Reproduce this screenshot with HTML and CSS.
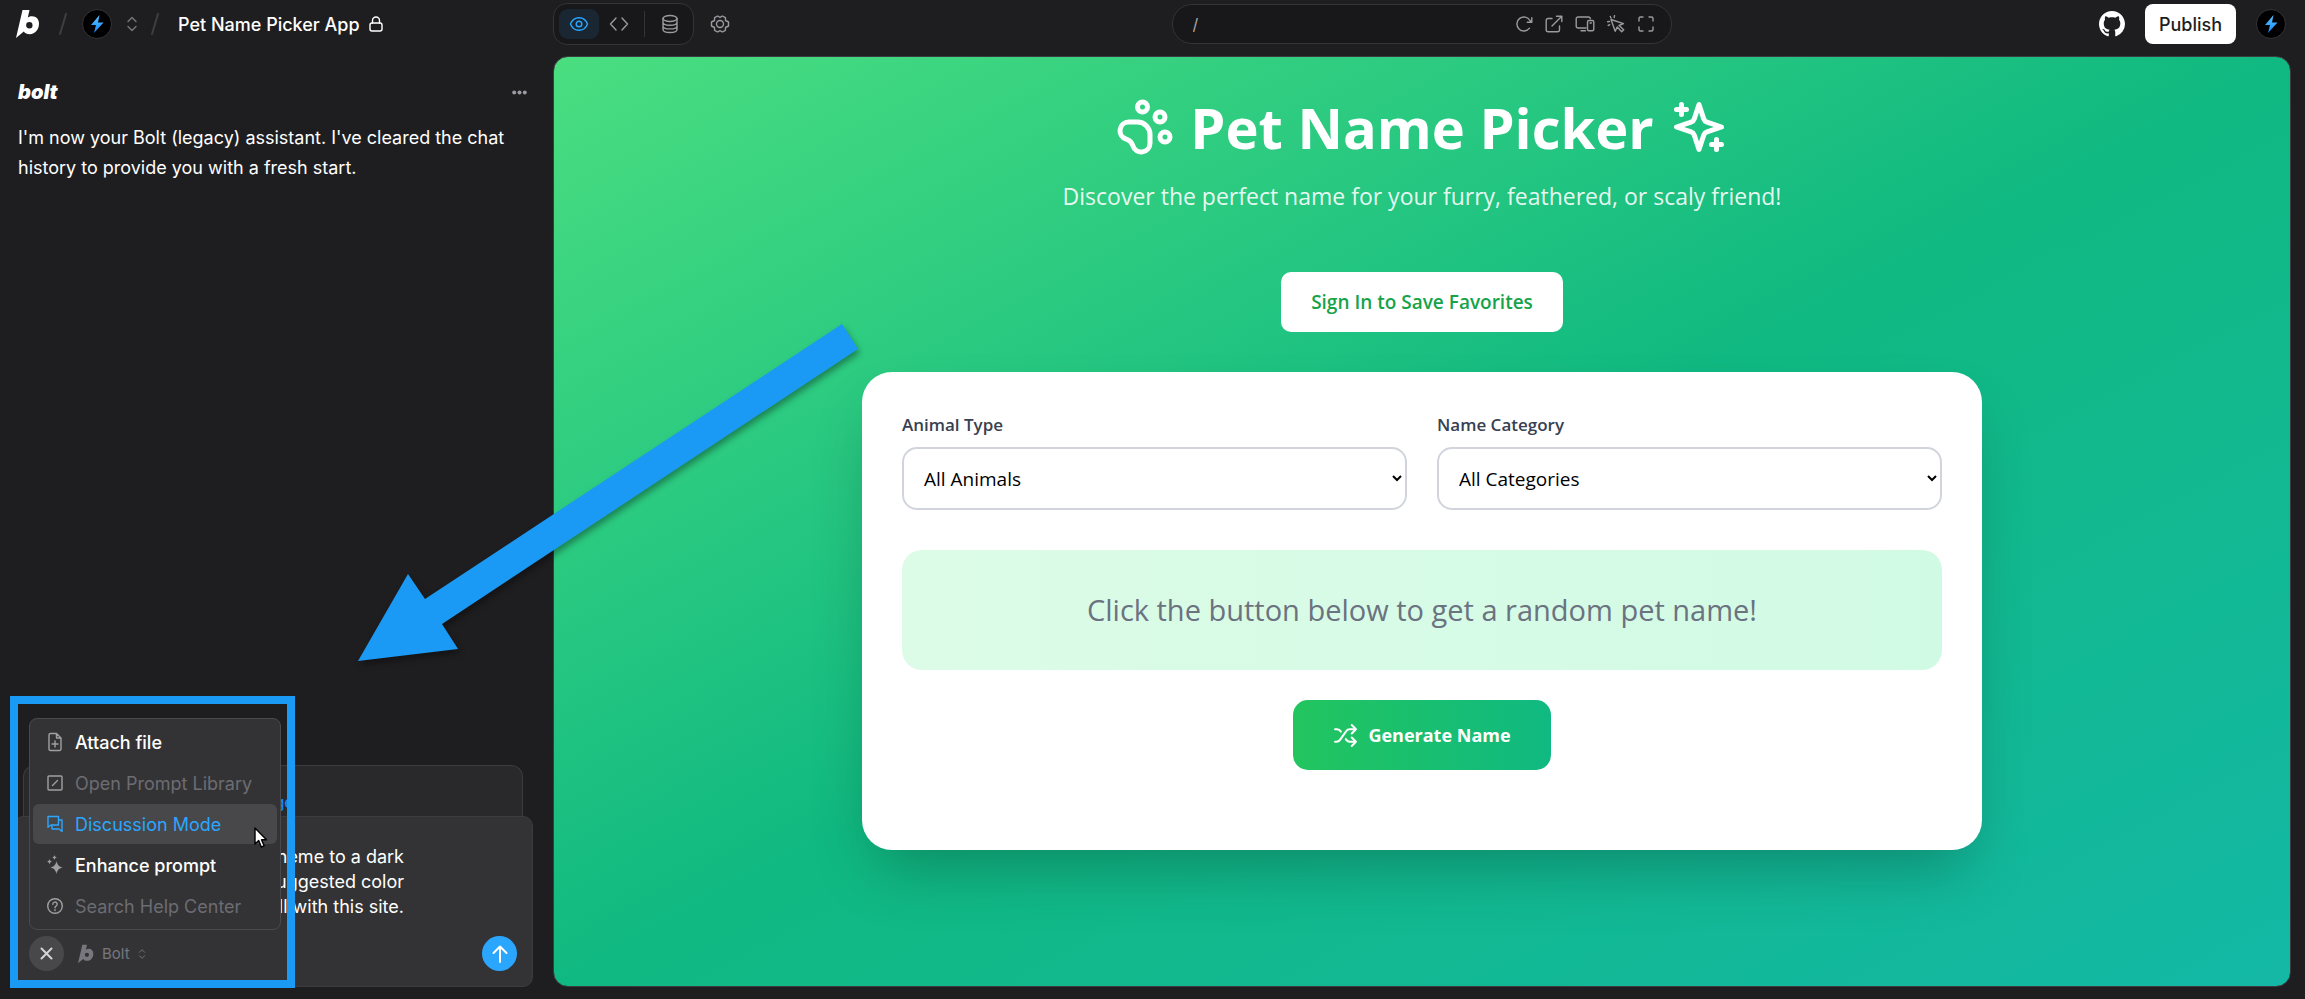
FILE: index.html
```html
<!DOCTYPE html>
<html lang="en">
    <head>
        <meta charset="utf-8">
        <title>Pet Name Picker App</title>
        <link rel="stylesheet" href="styles.css">
    </head>
    <body>
        <!-- shared icons -->
        <svg class="defs" width="0" height="0">
            <defs>
                <linearGradient id="boltFill" x1="0" y1="0" x2="0" y2="1">
                    <stop offset="0" stop-color="#5cc4ff"/>
                    <stop offset="1" stop-color="#1488fc"/>
                </linearGradient>
            </defs>
            <symbol id="logo" viewBox="0 0 24 30">
                <path fill="currentColor" fill-rule="evenodd" d="M6.500 1h7L11.800 8.500C13 7.600 14.500 7.200 16 7.200c4.500 0 7 3.100 7 7.400 0 5.900-3.800 10.700-9.200 10.700-2.800 0-4.800-1-6-2.800L0 29ZM13.300 13a3.200 3.200 0 1 0 .1 6.400 3.200 3.200 0 0 0-.1-6.400Z"/>
            </symbol>
            <symbol id="flash" viewBox="0 0 14 18">
                <path fill="url(#boltFill)" d="M9.500 0 1 10h5L4 18 13.500 7.500H8L9.500 0Z"/>
            </symbol>
            <symbol id="updown" viewBox="0 0 12 16">
                <path d="m2 5.500 4-4 4 4M2 10.500l4 4 4-4"/>
            </symbol>
        </svg>

        <header class="topbar">
            <div class="crumbs">
                <a class="brand" href="#" aria-label="Bolt"><svg width="24" height="30"><use href="#logo"/></svg></a>
                <svg class="slash" width="10" height="24" viewBox="0 0 10 24"><path d="M8 2 2 22"/></svg>
                <a class="avatar" href="#" aria-label="Account"><svg width="14" height="18"><use href="#flash"/></svg></a>
                <button class="icon-btn switch" aria-label="Switch account"><svg width="12" height="16"><use href="#updown"/></svg></button>
                <svg class="slash" width="10" height="24" viewBox="0 0 10 24"><path d="M8 2 2 22"/></svg>
                <a class="project" href="#">Pet Name Picker App
                    <svg width="16" height="18" viewBox="0 0 16 18"><rect x="2" y="8" width="12" height="8" rx="2"/><path d="M4.500 8V5.500a3.500 3.500 0 0 1 7 0V8"/></svg>
                </a>
            </div>

            <div class="tools">
                <div class="tools-left">
                    <nav class="views">
                        <button class="view active" aria-label="Preview"><svg width="20" height="16" viewBox="0 0 20 16"><path d="M1.500 8C3 4 6.200 1.700 10 1.700S17 4 18.500 8C17 12 13.800 14.300 10 14.300S3 12 1.500 8Z"/><circle cx="10" cy="8" r="2.800"/></svg></button>
                        <button class="view" aria-label="Code"><svg width="20" height="16" viewBox="0 0 20 16"><path d="M7 2 1.500 8 7 14M13 2l5.500 6L13 14"/></svg></button>
                        <span class="divider"></span>
                        <button class="view" aria-label="Database"><svg width="18" height="20" viewBox="0 0 18 20"><ellipse cx="9" cy="4.500" rx="7" ry="3"/><path d="M2 4.500v11c0 1.700 3.100 3 7 3s7-1.300 7-3v-11M2 8.200c0 1.700 3.100 3 7 3s7-1.300 7-3M2 11.900c0 1.700 3.100 3 7 3s7-1.300 7-3"/></svg></button>
                    </nav>
                    <button class="icon-btn settings" aria-label="Settings"><svg width="20" height="20" viewBox="0 0 20 20"><path d="m7.600 2 2.400 1.300L12.400 2l3 1.700.1 2.800L18.500 8v4l-3 1.500-.1 2.800-3 1.700-2.400-1.300L7.600 18l-3-1.700-.1-2.800L1.500 12V8l3-1.500.1-2.800Z"/><circle cx="10" cy="10" r="3.500"/></svg></button>
                </div>

                <div class="address">
                    <input class="path" type="text" value="/" aria-label="Path">
                    <button class="icon-btn" aria-label="Reload"><svg width="18" height="18" viewBox="0 0 18 18"><path d="M14.500 13.200A7 7 0 1 1 15 5.500l1.500 1.700M16.800 2.800v4.500h-4.500"/></svg></button>
                    <button class="icon-btn" aria-label="Open in new tab"><svg width="18" height="18" viewBox="0 0 18 18"><path d="M7 3.500H3.200a2 2 0 0 0-2 2v9.300a2 2 0 0 0 2 2h9.300a2 2 0 0 0 2-2V11M11.500 1.200h5.300v5.300M16.500 1.500 7 11"/></svg></button>
                    <button class="icon-btn" aria-label="Devices"><svg width="20" height="18" viewBox="0 0 20 18"><path d="M11 13H3a1.800 1.800 0 0 1-1.800-1.800V3.800A1.800 1.800 0 0 1 3 2h10.500a1.800 1.800 0 0 1 1.800 1.800M6 15.800h4.500"/><rect x="12.500" y="5.500" width="6.300" height="10.300" rx="1.500"/><path d="M15 8h1.300"/></svg></button>
                    <button class="icon-btn" aria-label="Select element"><svg width="18" height="18" viewBox="0 0 18 18"><path d="m4 4.500 4.200 11.800 2-4.300 4.500 4.800 2-2-4.700-4.300 4.500-1.800ZM7.500.5l-.3 2M3.300 1.500 4 3M.5 6.800l2-.3M1.200 10.500l1.600-.8"/></svg></button>
                    <button class="icon-btn" aria-label="Full screen"><svg width="18" height="18" viewBox="0 0 18 18"><path d="M2 6V3.500A1.500 1.500 0 0 1 3.500 2H6M12 2h2.500A1.500 1.500 0 0 1 16 3.500V6M16 12v2.500a1.500 1.500 0 0 1-1.500 1.500H12M6 16H3.500A1.500 1.500 0 0 1 2 14.500V12"/></svg></button>
                </div>

                <div class="tools-right">
                    <a class="github" href="#" aria-label="GitHub"><svg width="26" height="26" viewBox="0 0 16 16"><path fill="currentColor" stroke="none" d="M8 0C3.580 0 0 3.580 0 8c0 3.540 2.290 6.530 5.470 7.590.4.070.550-.170.550-.380 0-.190-.010-.820-.010-1.490-2.010.370-2.530-.490-2.690-.940-.090-.230-.480-.940-.820-1.130-.280-.150-.680-.520-.010-.530.630-.010 1.080.580 1.230.820.720 1.210 1.870.870 2.330.660.070-.520.280-.870.510-1.070-1.780-.2-3.640-.890-3.640-3.950 0-.870.310-1.590.820-2.150-.080-.2-.360-1.020.080-2.120 0 0 .670-.210 2.200.820.640-.180 1.320-.270 2-.270.680 0 1.360.090 2 .270 1.530-1.040 2.200-.820 2.200-.820.440 1.100.160 1.920.080 2.120.510.560.820 1.270.820 2.150 0 3.070-1.870 3.750-3.650 3.950.290.250.540.730.540 1.480 0 1.070-.010 1.930-.010 2.200 0 .210.150.460.550.380A8.012 8.012 0 0 0 16 8c0-4.420-3.580-8-8-8z"/></svg></a>
                    <button class="publish">Publish</button>
                    <a class="avatar" href="#" aria-label="Profile"><svg width="14" height="18"><use href="#flash"/></svg></a>
                </div>
            </div>
        </header>

        <main class="workspace">
            <section class="chat">
                <div class="message">
                    <div class="message-head">
                        <span class="wordmark">bolt</span>
                        <button class="icon-btn" aria-label="More"><svg width="15" height="5" viewBox="0 0 15 5"><g fill="currentColor" stroke="none"><circle cx="2.200" cy="2.500" r="2"/><circle cx="7.500" cy="2.500" r="2"/><circle cx="12.800" cy="2.500" r="2"/></g></svg></button>
                    </div>
                    <p>I'm now your Bolt (legacy) assistant. I've cleared the chat history to provide you with a fresh start.</p>
                </div>

                <div class="prompt">
                    <div class="notice"><a href="#">Manage</a></div>
                    <div class="composer">
                        <textarea rows="3" aria-label="Prompt">theme to a dark
suggested color
well with this site.</textarea>
                        <div class="composer-bar">
                            <button class="round close" aria-label="Close menu"><svg width="13" height="13" viewBox="0 0 13 13"><path d="m1.500 1.500 10 10M11.500 1.500l-10 10"/></svg></button>
                            <button class="agent"><svg width="16" height="20"><use href="#logo"/></svg>Bolt<svg width="8" height="12"><use href="#updown"/></svg></button>
                            <button class="round send" aria-label="Send"><svg width="16" height="18" viewBox="0 0 16 18"><path d="M8 17V1.500M1.500 8 8 1.500 14.500 8"/></svg></button>
                        </div>

                        <div class="menu">
                            <button class="item"><svg width="16" height="20" viewBox="0 0 16 20"><path d="M9.500 1.500h-6A1.500 1.500 0 0 0 2 3v14a1.500 1.500 0 0 0 1.500 1.500h9A1.500 1.500 0 0 0 14 17V6ZM9.500 1.500V6H14M8 9v6M5 12h6"/></svg>Attach file</button>
                            <button class="item" disabled><svg width="16" height="18" viewBox="0 0 16 18"><rect x="1" y="2" width="14" height="14" rx="1"/><path d="m5.500 11.500 5-5"/></svg>Open Prompt Library</button>
                            <button class="item active"><svg width="16" height="18" viewBox="0 0 16 18"><path d="M1 1.500h10.500v8.500H4L1 12.300ZM11.500 5H15v11.500L12 14H5v-3.800"/></svg>Discussion Mode</button>
                            <button class="item"><svg width="16" height="20" viewBox="0 0 16 20"><g fill="currentColor" stroke="none"><path d="M9.500 6c.8 4 2.500 5.700 6.500 6.500-4 .8-5.700 2.500-6.500 6.500-.8-4-2.500-5.700-6.500-6.500 4-.8 5.700-2.500 6.500-6.500ZM7.500 0c.4 1.500 1 2.100 2.500 2.500-1.500.4-2.100 1-2.500 2.500-.4-1.500-1-2.100-2.500-2.500 1.500-.4 2.100-1 2.500-2.500ZM2.500 4c.4 1.700 1 2.300 2.500 2.700-1.500.4-2.100 1-2.500 2.700C2.100 7.700 1.500 7.100 0 6.700 1.500 6.300 2.100 5.700 2.500 4Z"/></g></svg>Enhance prompt</button>
                            <button class="item" disabled><svg width="16" height="18" viewBox="0 0 16 18"><circle cx="8" cy="9" r="7.300"/><path d="M5.800 7.300A2.200 2.200 0 1 1 9 9.200c-.7.400-1 .8-1 1.500M8 12.700v.8"/></svg>Search Help Center</button>
                            <svg class="cursor" width="14" height="22" viewBox="0 0 14 22"><path fill="#fff" stroke="#000" d="M1 1v16l3.700-3.500L7.300 20l2.800-1.200-2.600-6H12.500Z"/></svg>
                        </div>
                    </div>
                </div>
            </section>

            <section class="preview">
                <h1>
                    <svg width="60" height="60" viewBox="0 0 24 24"><circle cx="11" cy="4" r="2"/><circle cx="18" cy="8" r="2"/><circle cx="20" cy="16" r="2"/><path d="M9 10a5 5 0 0 1 5 5v3.500a3.500 3.500 0 0 1-6.840 1.045Q6.520 17.480 4.460 16.840A3.500 3.500 0 0 1 5.500 10Z"/></svg>
                    Pet Name Picker
                    <svg width="60" height="60" viewBox="0 0 24 24"><path d="m12 3-1.912 5.813a2 2 0 0 1-1.275 1.275L3 12l5.813 1.912a2 2 0 0 1 1.275 1.275L12 21l1.912-5.813a2 2 0 0 1 1.275-1.275L21 12l-5.813-1.912a2 2 0 0 1-1.275-1.275L12 3ZM5 3v4M19 17v4M3 5h4M17 19h4"/></svg>
                </h1>
                <p class="tagline">Discover the perfect name for your furry, feathered, or scaly friend!</p>
                <button class="signin">Sign In to Save Favorites</button>

                <div class="card">
                    <div class="filters">
                        <div class="field">
                            <label for="animal">Animal Type</label>
                            <select id="animal"><option>All Animals</option></select>
                        </div>
                        <div class="field">
                            <label for="category">Name Category</label>
                            <select id="category"><option>All Categories</option></select>
                        </div>
                    </div>
                    <div class="result">Click the button below to get a random pet name!</div>
                    <button class="generate">
                        <svg width="25" height="25" viewBox="0 0 24 24"><path d="M2 18h1.400c1.300 0 2.500-.6 3.300-1.700l6.100-8.600c.7-1.100 2-1.700 3.300-1.700H22M18 2l4 4-4 4M2 6h1.900c1.500 0 2.900.9 3.600 2.200M22 18h-5.900c-1.300 0-2.600-.7-3.300-1.800l-.5-.8M18 14l4 4-4 4"/></svg>
                        Generate Name
                    </button>
                </div>
            </section>
        </main>

        <!-- callout -->
        <svg class="arrow" width="520" height="360" viewBox="350 315 520 360"><path fill="#1b9af5" stroke="none" d="M358 661 408 574 425 599 842 324 858 349 442 624 458 649Z"/></svg>
        <div class="frame"></div>
    </body>
</html>
```

FILE: styles.css
```css
*{
    box-sizing: border-box;
}
body{
    margin: 0;
    height: 100vh;
    display: flex;
    flex-direction: column;
    position: relative;
    overflow: hidden;
    background-color: #1e1e21;
    color: #fff;
    font-family: Inter, "Liberation Sans", sans-serif;
    font-size: 18px;
}
a{
    color: inherit;
    text-decoration: none;
}
button, input, select, textarea{
    font: inherit;
    color: inherit;
    margin: 0;
    padding: 0;
    border: 0;
    background: none;
}
svg{
    display: block;
    flex: none;
    fill: none;
    stroke: currentColor;
    stroke-width: 1.4;
    stroke-linecap: round;
    stroke-linejoin: round;
}
symbol{
    overflow: visible;
}
#logo, #flash{
    stroke: none;
}
.defs{
    position: absolute;
}

/* top bar */
.topbar{
    display: grid;
    grid-template-columns: 553px 1fr;
    height: 56px;
    padding: 0 15px 8px 0;
    align-items: center;
}
.crumbs{
    display: flex;
    align-items: center;
    padding-left: 16px;
}
.slash{
    color: #3f3f43;
    stroke-width: 2;
    margin: 0 14px 0 18px;
}
.crumbs .slash:nth-of-type(2){
    margin: 0 18px 0 12px;
}
.avatar{
    display: flex;
    align-items: center;
    justify-content: center;
    width: 30px;
    height: 30px;
    border: 1px solid #343438;
    border-radius: 50%;
    background-color: #000;
}
.icon-btn{
    display: flex;
    align-items: center;
    justify-content: center;
    color: #9a9aa0;
}
.switch{
    margin-left: 14px;
    color: #77777d;
}
.project{
    display: flex;
    align-items: center;
    gap: 8px;
    font-weight: 500;
}
.tools{
    display: grid;
    grid-template-columns: 1fr 500px 1fr;
    align-items: center;
}
.tools-left, .tools-right{
    display: flex;
    align-items: center;
}
.tools-right{
    justify-content: flex-end;
    gap: 20px;
    padding-right: 4px;
}
.views{
    display: flex;
    align-items: center;
    height: 42px;
    padding: 0 3px 0 5px;
    border: 1px solid #343438;
    border-radius: 14px;
    background-color: #18181a;
    color: #9a9aa0;
}
.view{
    display: flex;
    align-items: center;
    justify-content: center;
    width: 40px;
    height: 30px;
    border-radius: 9px;
}
.view.active{
    background-color: #1a2733;
    color: #2ba6ff;
}
.views .divider{
    width: 1px;
    height: 26px;
    margin: 0 5px;
    background-color: #343438;
}
.settings{
    margin-left: 16px;
}
.address{
    display: flex;
    align-items: center;
    gap: 12px;
    height: 40px;
    padding: 0 16px 0 20px;
    border: 1px solid #343438;
    border-radius: 20px;
    background-color: #18181a;
}
.path{
    flex: 1;
    min-width: 0;
    color: #a8a8ae;
    font-size: 16px;
}
.publish{
    height: 40px;
    padding: 0 14px;
    border-radius: 8px;
    background-color: #fff;
    color: #1e1e21;
    font-weight: 500;
}

/* chat column */
.workspace{
    flex: 1;
    display: grid;
    grid-template-columns: 553px 1fr;
    padding: 0 14px 12px 0;
    min-height: 0;
}
.chat{
    display: flex;
    flex-direction: column;
    justify-content: space-between;
    padding: 22px 20px 0 13px;
}
.message{
    padding: 0 6px 0 5px;
}
.message-head{
    display: flex;
    align-items: center;
    justify-content: space-between;
    height: 28px;
}
.wordmark{
    font-size: 20px;
    font-weight: 900;
    font-style: italic;
}
.message p{
    margin: 17px 0 0;
    line-height: 30px;
}
.notice{
    height: 51px;
    margin: 0 10px;
    padding: 26px 0 0 208px;
    border: 1px solid #3c3c40;
    border-bottom: 0;
    border-radius: 12px 12px 0 0;
    background-color: #29292b;
    color: #1488fc;
    font-size: 16px;
    font-weight: 500;
    line-height: 20px;
}
.composer{
    position: relative;
    border: 1px solid #3c3c40;
    border-radius: 10px;
    background-color: #333335;
}
.composer textarea{
    display: block;
    width: 100%;
    height: 119px;
    padding: 27px 128px 17px 16px;
    overflow: hidden;
    resize: none;
    line-height: 25px;
    text-align: right;
}
.composer-bar{
    display: flex;
    align-items: center;
    padding: 0 15px 15px;
}
.round{
    display: flex;
    align-items: center;
    justify-content: center;
    width: 35px;
    height: 35px;
    border-radius: 50%;
}
.round svg{
    stroke-width: 2;
}
.close{
    background-color: #48484a;
    color: #d4d4d8;
}
.send{
    margin-left: auto;
    background-color: #2ba6ff;
}
.agent{
    display: flex;
    align-items: center;
    gap: 8px;
    margin-left: 14px;
    color: #77777d;
    font-size: 15px;
}
.menu{
    position: absolute;
    left: 15px;
    bottom: 56px;
    display: flex;
    flex-direction: column;
    gap: 1px;
    width: 252px;
    padding: 3px;
    border: 1px solid #4a4a4d;
    border-radius: 8px;
    background-color: #333335;
}
.item{
    display: flex;
    align-items: center;
    gap: 12px;
    height: 40px;
    padding: 0 14px;
    border-radius: 6px;
    font-weight: 500;
}
.item svg{
    color: #a0a0a4;
}
.item:disabled{
    color: #6c6c73;
    font-weight: 400;
}
.item.active, .item.active svg{
    background-color: #48484a;
    color: #2ba6ff;
    font-weight: 400;
}
.menu .cursor{
    position: absolute;
    left: 224px;
    top: 108px;
}

/* app preview */
.preview{
    display: flex;
    flex-direction: column;
    align-items: center;
    padding: 40px;
    border: 1px solid #3c3c40;
    border-radius: 15px;
    background: linear-gradient(to bottom right, #4ade80, #10b981, #14b8a6);
    font-family: "Open Sans", "Noto Sans", sans-serif;
}
.preview h1{
    display: flex;
    align-items: center;
    gap: 15px;
    height: 60px;
    margin: 0;
    font-size: 56px;
    font-weight: 700;
    line-height: 64px;
}
.preview svg{
    stroke-width: 2;
}
.tagline{
    margin: 22px 0 58px;
    color: rgba(255, 255, 255, .9);
    font-size: 23px;
    line-height: 35px;
}
.signin{
    height: 60px;
    padding: 0 30px;
    border-radius: 10px;
    background-color: #fff;
    color: #16a34a;
    font-size: 19px;
    font-weight: 600;
}
.card{
    display: flex;
    flex-direction: column;
    align-items: center;
    width: 100%;
    max-width: 1120px;
    margin-top: 40px;
    padding: 40px 40px 80px;
    border-radius: 30px;
    background-color: #fff;
    box-shadow: 0 32px 62px -15px rgba(0, 0, 0, .25);
}
.filters{
    display: grid;
    grid-template-columns: 1fr 1fr;
    gap: 30px;
    width: 100%;
}
.field label{
    display: block;
    margin-bottom: 10px;
    color: #374151;
    font-size: 17px;
    font-weight: 600;
    line-height: 25px;
}
.field select{
    display: block;
    width: 100%;
    height: 63px;
    padding: 0 16px;
    border: 2px solid #d1d5db;
    border-radius: 15px;
    background-color: #fff;
    color: #000;
    font-size: 19px;
}
.result{
    width: 100%;
    margin: 40px 0 30px;
    padding: 40px;
    border-radius: 20px;
    background: linear-gradient(to right, #dcfce7, #d1fae5);
    color: #6b7280;
    font-size: 29px;
    line-height: 40px;
    text-align: center;
}
.generate{
    display: flex;
    align-items: center;
    gap: 10px;
    height: 70px;
    padding: 0 40px;
    border-radius: 15px;
    background: linear-gradient(to right, #22c55e, #10b981);
    color: #fff;
    font-size: 18px;
    font-weight: 700;
}

/* callout over the chat */
.arrow{
    position: absolute;
    left: 350px;
    top: 315px;
    filter: drop-shadow(2px 4px 3px rgba(0, 0, 0, .35));
    pointer-events: none;
}
.frame{
    position: absolute;
    left: 10px;
    bottom: 11px;
    width: 285px;
    height: 292px;
    border: 8px solid #1b9af5;
    pointer-events: none;
}
```
